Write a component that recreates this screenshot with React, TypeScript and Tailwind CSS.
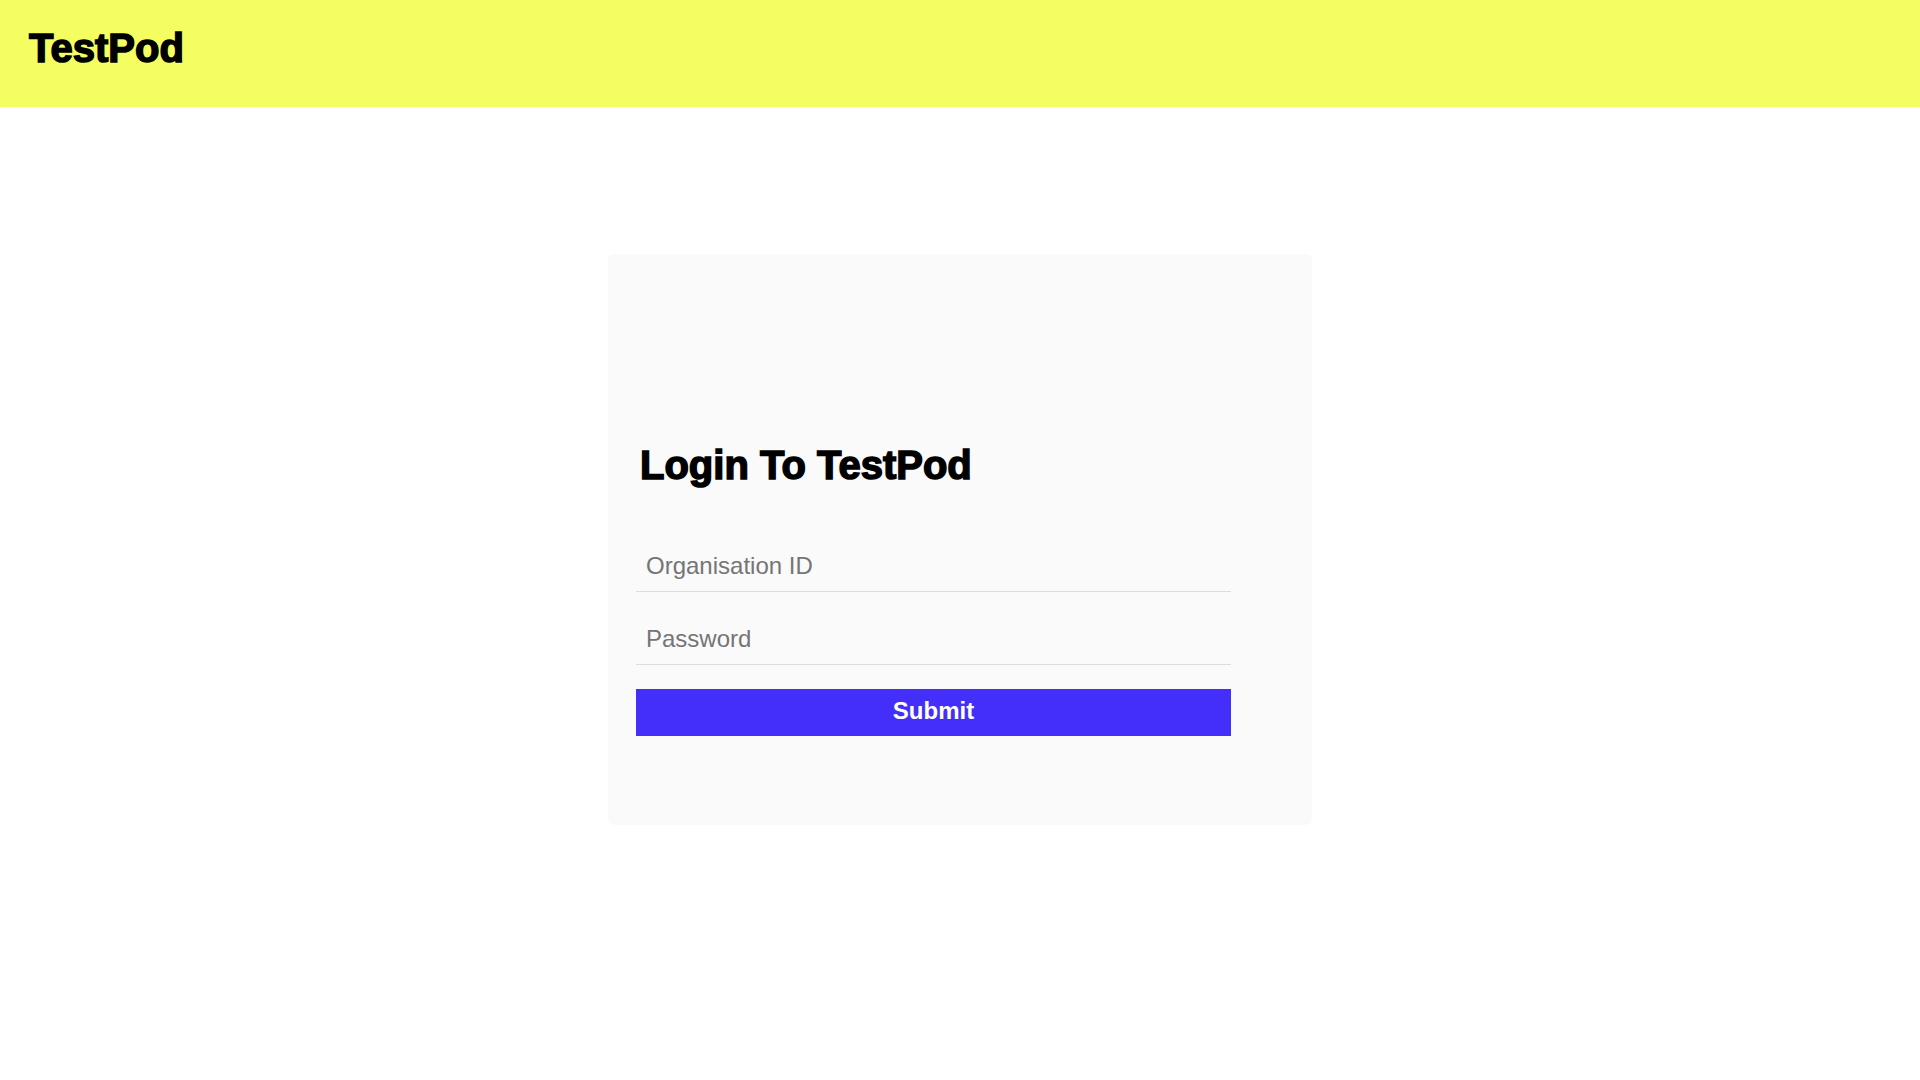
import { useState } from "react";

export default function App() {
  const [orgId, setOrgId] = useState("");
  const [password, setPassword] = useState("");

  return (
    <div className="min-h-screen bg-white font-['Liberation_Sans',Arial,sans-serif]">
      <header className="flex h-[107px] items-start bg-[#f4fe60] px-[29px] pt-[25px]">
        <h1 className="text-[40px] font-bold leading-[46px] text-black [-webkit-text-stroke:1.5px_black]">TestPod</h1>
      </header>

      <main className="flex justify-center pt-[147px]">
        <div className="h-[571px] w-[704px] rounded-md bg-[#fafafa] pl-[28px] pt-[188px]">
          <h2 className="ml-[4px] text-[40px] font-bold leading-[46px] text-black [-webkit-text-stroke:1.5px_black]">
            Login To TestPod
          </h2>

          <form className="mt-[53px] flex w-[595px] flex-col" onSubmit={(e) => e.preventDefault()}>
            <input
              type="text"
              value={orgId}
              onChange={(e) => setOrgId(e.target.value)}
              placeholder="Organisation ID"
              className="h-[51px] border-b border-[#dddddd] bg-transparent px-[10px] text-[24px] text-black outline-none placeholder:text-[#757575]"
            />
            <input
              type="password"
              value={password}
              onChange={(e) => setPassword(e.target.value)}
              placeholder="Password"
              className="mt-[22px] h-[51px] border-b border-[#dddddd] bg-transparent px-[10px] text-[24px] text-black outline-none placeholder:text-[#757575]"
            />
            <button
              type="submit"
              className="mt-[24px] flex h-[47px] items-center justify-center bg-[#432ff9] pb-[3px] text-[24px] font-bold text-white"
            >
              Submit
            </button>
          </form>
        </div>
      </main>
    </div>
  );
}
